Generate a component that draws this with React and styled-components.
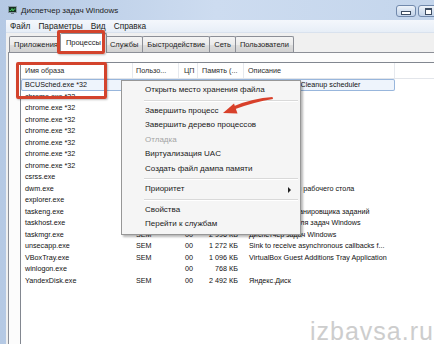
import React from "react"
import styled, { createGlobalStyle } from "styled-components"

const GlobalStyle = createGlobalStyle`
  html, body {
    margin: 0;
    padding: 0;
    background: #ffffff;
  }
  body {
    font-family: "Liberation Sans", Arial, sans-serif;
  }
`

const Screen = styled.div`
  position: relative;
  width: 434px;
  height: 344px;
  overflow: hidden;
`

const Window = styled.div`
  width: 480px;
  height: 344px;
  display: flex;
  flex-direction: column;
  background: linear-gradient(90deg, #b5c9e4 0%, #cddcf0 45%, #c2d4eb 100%);
`

const TitleBar = styled.div`
  height: 20px;
  flex-shrink: 0;
  display: flex;
  align-items: center;
  padding-left: 8px;
`

const TitleText = styled.span`
  margin-left: 4px;
  font-size: 8px;
  color: #1c1c1c;
`

const CaptionButtons = styled.div`
  margin-left: auto;
  margin-right: 2px;
  align-self: flex-start;
  margin-top: 5px;
  display: flex;
  gap: 2px;
`

const CaptionButton = styled.div`
  width: ${({ $w }) => $w}px;
  height: 12px;
  box-sizing: border-box;
  border: 1px solid #7189ac;
  border-radius: 3px;
  background: ${({ $close }) =>
    $close
      ? "linear-gradient(#e8a493, #cf5a3f 50%, #c23b1f)"
      : "linear-gradient(#eef3fa, #d5e1f0 50%, #c4d4ea)"};
  display: flex;
  align-items: center;
  justify-content: center;
`

const MinGlyph = styled.div`
  width: 8px;
  height: 2px;
  margin-top: 4px;
  background: #fff;
  border: 1px solid #3d4d63;
`

const MaxGlyph = styled.div`
  width: 5px;
  height: 4px;
  border: 1px solid #3d4d63;
  border-top-width: 2px;
  background: #fff;
`

const Client = styled.div`
  flex: 1;
  min-height: 0;
  margin-left: 6px;
  display: flex;
  flex-direction: column;
  background: #f0f0f0;
`

const MenuBar = styled.div`
  height: 12px;
  flex-shrink: 0;
  display: flex;
  align-items: center;
  background: linear-gradient(#f4f7fc, #e7eef7);
  border-bottom: 1px solid #d9e2ee;
`

const MenuBarItem = styled.span`
  padding: 0 4px;
  font-size: 8.3px;
  color: #1c1c1c;
`

const TabStrip = styled.div`
  height: 19px;
  flex-shrink: 0;
  display: flex;
  align-items: flex-end;
  padding-left: 3px;
`

const Tab = styled.div`
  position: relative;
  height: ${({ $selected }) => ($selected ? 19 : 15)}px;
  line-height: ${({ $selected }) => ($selected ? 17 : 15)}px;
  padding: 0 ${({ $selected }) => ($selected ? 5 : 4)}px;
  margin: ${({ $selected }) => ($selected ? "0 -2px -1px -2px" : "0 -1px 0 0")};
  z-index: ${({ $selected }) => ($selected ? 2 : 1)};
  font-size: 7.5px;
  color: #1c1c1c;
  border: 1px solid #8c8f97;
  border-bottom: none;
  border-radius: 2px 2px 0 0;
  background: ${({ $selected }) =>
    $selected ? "#ffffff" : "linear-gradient(#f4f4f4, #ebebeb 50%, #dedede 51%, #d2d2d2)"};
`

const TabPanel = styled.div`
  flex: 1;
  min-height: 0;
  margin-left: 2px;
  border-left: 1px solid #8c8f97;
  border-top: 1px solid #8c8f97;
  background: #fcfcfc;
  padding: 9px 0 0 11px;
  display: flex;
`

const ListView = styled.div`
  flex: 1;
  border-left: 1px solid #828790;
  border-top: 1px solid #828790;
  background: #ffffff;
  display: flex;
  flex-direction: column;
  overflow: hidden;
`

const columns = "112px 46px 19px 46px 151px"

const HeaderRow = styled.div`
  display: grid;
  grid-template-columns: ${columns} 1fr;
  height: 15px;
  flex-shrink: 0;
  border-bottom: 1px solid #e2e5ea;
`

const HeaderCell = styled.div`
  padding-left: ${({ $pad }) => $pad}px;
  line-height: 15px;
  font-size: 7.2px;
  color: #2b2b2b;
  white-space: nowrap;
  overflow: hidden;
  border-right: 1px solid #e6e9ee;
  &:last-child {
    border-right: none;
  }
`

const Row = styled.div`
  display: grid;
  grid-template-columns: ${columns};
  width: 374px;
  height: 11.5px;
  line-height: 11.5px;
  font-size: 7.2px;
  color: #111;
  border-radius: 2px;
  background: ${({ $selected }) => ($selected ? "#eef4fc" : "transparent")};
  box-shadow: ${({ $selected }) => ($selected ? "inset 0 0 0 1px #98b6dc" : "none")};
`

const Cell = styled.div`
  white-space: nowrap;
  overflow: hidden;
  text-align: ${({ $right }) => ($right ? "right" : "left")};
  padding: ${({ $right, $pad }) => ($right ? `0 ${$pad}px 0 0` : `0 0 0 ${$pad}px`)};
`

const ContextMenu = styled.div`
  position: absolute;
  left: 121px;
  top: 80px;
  width: 180px;
  box-sizing: border-box;
  padding: 2px;
  background: #f5f5f5;
  border: 1px solid #979797;
  box-shadow: 2px 2px 2px rgba(0, 0, 0, 0.28);
  z-index: 5;
`

const MenuEntry = styled.div`
  position: relative;
  height: 14.5px;
  line-height: 14.5px;
  padding-left: 21px;
  font-size: 8px;
  color: ${({ $disabled }) => ($disabled ? "#a4a4a4" : "#1a1a1a")};
  white-space: nowrap;
`

const SubArrow = styled.span`
  position: absolute;
  right: 7px;
  top: 4.5px;
  width: 0;
  height: 0;
  border-left: 3px solid #222;
  border-top: 3px solid transparent;
  border-bottom: 3px solid transparent;
`

const MenuSeparator = styled.div`
  height: 6px;
  display: flex;
  align-items: center;
  padding-left: 20px;
  &::after {
    content: "";
    flex: 1;
    border-top: 1px solid #d9d9d9;
    border-bottom: 1px solid #ffffff;
  }
`

const RedBox = styled.div`
  position: absolute;
  left: ${({ $x }) => $x}px;
  top: ${({ $y }) => $y}px;
  width: ${({ $w }) => $w}px;
  height: ${({ $h }) => $h}px;
  box-sizing: border-box;
  border: 3px solid #d3432c;
  border-radius: 2px;
  box-shadow: 1px 1px 2px rgba(0, 0, 0, 0.25);
  z-index: 6;
`

const Arrow = styled.svg`
  position: absolute;
  left: 220px;
  top: 92px;
  z-index: 7;
`

const Watermark = styled.div`
  position: absolute;
  left: 310px;
  top: 319px;
  font-size: 25px;
  line-height: 25px;
  letter-spacing: 1px;
  color: #cdcdcd;
  z-index: 8;
`

const rows = [
  { name: "BCUSched.exe *32", user: "SEM", cpu: "00", mem: "1 184 КБ", desc: "Backup Utility 2 Cleanup scheduler", selected: true },
  { name: "chrome.exe *32", user: "SEM", cpu: "00", mem: "52 616 КБ", desc: "Google Chrome" },
  { name: "chrome.exe *32", user: "SEM", cpu: "00", mem: "28 904 КБ", desc: "Google Chrome" },
  { name: "chrome.exe *32", user: "SEM", cpu: "00", mem: "41 220 КБ", desc: "Google Chrome" },
  { name: "chrome.exe *32", user: "SEM", cpu: "00", mem: "18 332 КБ", desc: "Google Chrome" },
  { name: "chrome.exe *32", user: "SEM", cpu: "00", mem: "24 780 КБ", desc: "Google Chrome" },
  { name: "chrome.exe *32", user: "SEM", cpu: "00", mem: "9 416 КБ", desc: "Google Chrome" },
  { name: "chrome.exe *32", user: "SEM", cpu: "00", mem: "33 052 КБ", desc: "Google Chrome" },
  { name: "csrss.exe", user: "", cpu: "00", mem: "1 560 КБ", desc: "" },
  { name: "dwm.exe", user: "SEM", cpu: "00", mem: "1 024 КБ", desc: "Диспетчер окон рабочего стола" },
  { name: "explorer.exe", user: "SEM", cpu: "00", mem: "19 884 КБ", desc: "Проводник" },
  { name: "taskeng.exe", user: "SEM", cpu: "00", mem: "1 748 КБ", desc: "Обработчик планировщика заданий" },
  { name: "taskhost.exe", user: "SEM", cpu: "00", mem: "2 312 КБ", desc: "Хост-процесс для задач Windows" },
  { name: "taskmgr.exe", user: "SEM", cpu: "00", mem: "2 996 КБ", desc: "Диспетчер задач Windows" },
  { name: "unsecapp.exe", user: "SEM", cpu: "00", mem: "1 272 КБ", desc: "Sink to receive asynchronous callbacks f..." },
  { name: "VBoxTray.exe", user: "SEM", cpu: "00", mem: "1 096 КБ", desc: "VirtualBox Guest Additions Tray Application" },
  { name: "winlogon.exe", user: "", cpu: "00", mem: "768 КБ", desc: "" },
  { name: "YandexDisk.exe", user: "SEM", cpu: "00", mem: "2 492 КБ", desc: "Яндекс.Диск" },
]

const tabs = ["Приложения", "Процессы", "Службы", "Быстродействие", "Сеть", "Пользователи"]

const menu = [
  { label: "Открыть место хранения файла" },
  { sep: true },
  { label: "Завершить процесс" },
  { label: "Завершить дерево процессов" },
  { label: "Отладка", disabled: true },
  { label: "Виртуализация UAC" },
  { label: "Создать файл дампа памяти" },
  { sep: true },
  { label: "Приоритет", sub: true },
  { sep: true },
  { label: "Свойства" },
  { label: "Перейти к службам" },
]

function AppIcon() {
  return (
    <svg width="9" height="8" viewBox="0 0 9 8">
      <rect x="0.5" y="0.5" width="8" height="6" fill="#16301f" stroke="#8a9aa8" />
      <polyline points="1.5,4.5 3,4.5 4,2.5 5,5 6,3 7.5,3" fill="none" stroke="#4fe06a" strokeWidth="0.8" />
      <rect x="3" y="7" width="3" height="1" fill="#6b7b8a" />
    </svg>
  )
}

export default function App() {
  return (
    <Screen>
      <GlobalStyle />
      <Window>
        <TitleBar>
          <AppIcon />
          <TitleText>Диспетчер задач Windows</TitleText>
          <CaptionButtons>
            <CaptionButton $w={20}>
              <MinGlyph />
            </CaptionButton>
            <CaptionButton $w={20}>
              <MaxGlyph />
            </CaptionButton>
            <CaptionButton $w={38} $close />
          </CaptionButtons>
        </TitleBar>
        <Client>
          <MenuBar>
            <MenuBarItem>Файл</MenuBarItem>
            <MenuBarItem>Параметры</MenuBarItem>
            <MenuBarItem>Вид</MenuBarItem>
            <MenuBarItem>Справка</MenuBarItem>
          </MenuBar>
          <TabStrip>
            {tabs.map((t) => (
              <Tab key={t} $selected={t === "Процессы"}>
                {t}
              </Tab>
            ))}
          </TabStrip>
          <TabPanel>
            <ListView>
              <HeaderRow>
                <HeaderCell $pad={4}>Имя образа</HeaderCell>
                <HeaderCell $pad={3}>Пользо...</HeaderCell>
                <HeaderCell $pad={5}>ЦП</HeaderCell>
                <HeaderCell $pad={4}>Память (...</HeaderCell>
                <HeaderCell $pad={4}>Описание</HeaderCell>
                <HeaderCell $pad={0} />
              </HeaderRow>
              {rows.map((r, i) => (
                <Row key={i} $selected={r.selected}>
                  <Cell $pad={4}>{r.name}</Cell>
                  <Cell $pad={3}>{r.user}</Cell>
                  <Cell $right $pad={5}>{r.cpu}</Cell>
                  <Cell $right $pad={6}>{r.mem}</Cell>
                  <Cell $pad={5}>{r.desc}</Cell>
                </Row>
              ))}
            </ListView>
          </TabPanel>
        </Client>
      </Window>

      <ContextMenu>
        {menu.map((m, i) =>
          m.sep ? (
            <MenuSeparator key={i} />
          ) : (
            <MenuEntry key={i} $disabled={m.disabled}>
              {m.label}
              {m.sub && <SubArrow />}
            </MenuEntry>
          )
        )}
      </ContextMenu>

      <RedBox $x={57} $y={30} $w={48} $h={24} />
      <RedBox $x={16} $y={62} $w={91} $h={37} />

      <Arrow width="58" height="26" viewBox="0 0 58 26">
        <path d="M53 7 Q 34 10 14 17.5 L 13 14.5 Q 33 6 52.5 5 Z" fill="#d8402a" />
        <polygon points="3,21 14,11.5 17.5,21.5" fill="#d8402a" />
      </Arrow>

      <Watermark>izbavsa.ru</Watermark>
    </Screen>
  )
}
